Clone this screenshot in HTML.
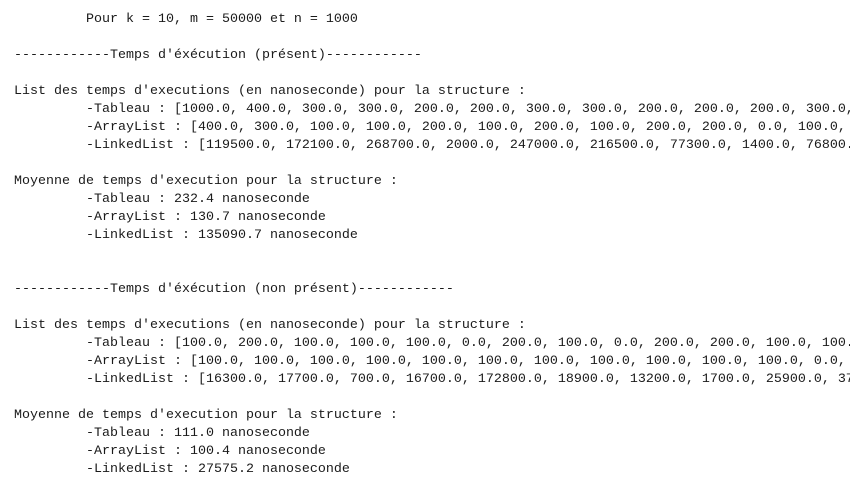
<!DOCTYPE html>
<html><head><meta charset="utf-8"><style>
html,body{margin:0;padding:0;background:#fff;width:850px;height:478px;overflow:hidden}
pre{margin:0;position:absolute;left:14px;top:11px;width:836px;overflow:hidden;font-family:"Liberation Mono",monospace;font-size:13.33px;line-height:18px;color:#1a1a1a;white-space:pre}
</style></head><body><pre>         Pour k = 10, m = 50000 et n = 1000

------------Temps d'éxécution (présent)------------

List des temps d'executions (en nanoseconde) pour la structure :
         -Tableau : [1000.0, 400.0, 300.0, 300.0, 200.0, 200.0, 300.0, 300.0, 200.0, 200.0, 200.0, 300.0, 200.0]
         -ArrayList : [400.0, 300.0, 100.0, 100.0, 200.0, 100.0, 200.0, 100.0, 200.0, 200.0, 0.0, 100.0, 100.0]
         -LinkedList : [119500.0, 172100.0, 268700.0, 2000.0, 247000.0, 216500.0, 77300.0, 1400.0, 76800.0]

Moyenne de temps d'execution pour la structure :
         -Tableau : 232.4 nanoseconde
         -ArrayList : 130.7 nanoseconde
         -LinkedList : 135090.7 nanoseconde


------------Temps d'éxécution (non présent)------------

List des temps d'executions (en nanoseconde) pour la structure :
         -Tableau : [100.0, 200.0, 100.0, 100.0, 100.0, 0.0, 200.0, 100.0, 0.0, 200.0, 200.0, 100.0, 100.0]
         -ArrayList : [100.0, 100.0, 100.0, 100.0, 100.0, 100.0, 100.0, 100.0, 100.0, 100.0, 100.0, 0.0, 100.0]
         -LinkedList : [16300.0, 17700.0, 700.0, 16700.0, 172800.0, 18900.0, 13200.0, 1700.0, 25900.0, 37000.0]

Moyenne de temps d'execution pour la structure :
         -Tableau : 111.0 nanoseconde
         -ArrayList : 100.4 nanoseconde
         -LinkedList : 27575.2 nanoseconde</pre></body></html>
